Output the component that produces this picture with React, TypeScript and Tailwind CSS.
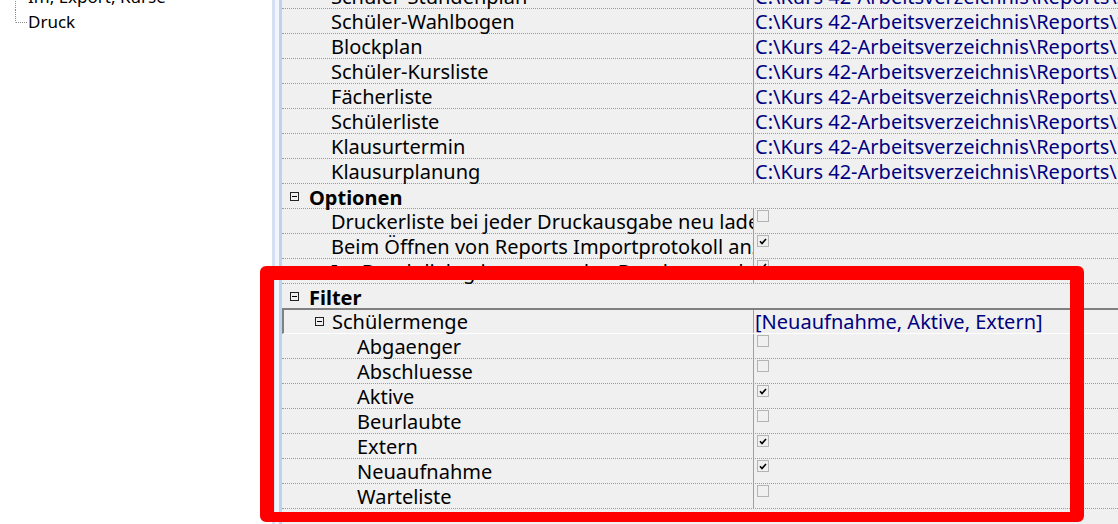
import React from 'react';

const PATH = 'C:\\Kurs 42-Arbeitsverzeichnis\\Reports\\';

type Prop = { label: string; value?: string; check?: boolean };

const reports: Prop[] = [
  { label: 'Schüler-Stundenplan', value: PATH + 'Schuelerstundenplan.rpt' },
  { label: 'Schüler-Wahlbogen', value: PATH + 'Schuelerwahlbogen.rpt' },
  { label: 'Blockplan', value: PATH + 'Blockplan.rpt' },
  { label: 'Schüler-Kursliste', value: PATH + 'Schuelerkursliste.rpt' },
  { label: 'Fächerliste', value: PATH + 'Faecherliste.rpt' },
  { label: 'Schülerliste', value: PATH + 'Schuelerliste.rpt' },
  { label: 'Klausurtermin', value: PATH + 'Klausurtermin.rpt' },
  { label: 'Klausurplanung', value: PATH + 'Klausurplanung.rpt' },
];

const options: Prop[] = [
  { label: 'Druckerliste bei jeder Druckausgabe neu laden', check: false },
  { label: 'Beim Öffnen von Reports Importprotokoll anzeigen', check: true },
  { label: 'Im Druckdialog immer an den Drucker senden', check: true },
];

const mengen: Prop[] = [
  { label: 'Abgaenger', check: false },
  { label: 'Abschluesse', check: false },
  { label: 'Aktive', check: true },
  { label: 'Beurlaubte', check: false },
  { label: 'Extern', check: true },
  { label: 'Neuaufnahme', check: true },
  { label: 'Warteliste', check: false },
];

function Expander() {
  return (
    <span className="flex h-[9px] w-[9px] shrink-0 items-center justify-center border border-[#222]">
      <span className="h-px w-[5px] bg-black" />
    </span>
  );
}

function CheckBox({ checked }: { checked?: boolean }) {
  return (
    <span className="ml-[3px] mt-[1px] flex h-[12px] w-[12px] items-center justify-center border border-[#b4b4b4]">
      {checked && (
        <svg width="8" height="7" viewBox="0 0 8 7" className="block">
          <path d="M1 3.3 L3 5.5 L7 1" fill="none" stroke="#000" strokeWidth="1.6" />
        </svg>
      )}
    </span>
  );
}

function PropRow({ prop, sub }: { prop: Prop; sub?: boolean }) {
  return (
    <div className="flex h-[25px] border-b border-dotted border-[#9a9a9a]">
      <div
        className={
          'w-[472px] shrink-0 overflow-x-clip whitespace-nowrap border-r border-[#a0a0a0] pt-[2px] leading-[21px] ' +
          (sub ? 'pl-[75px]' : 'pl-[49px]')
        }
      >
        {prop.label}
      </div>
      <div className="flex min-w-0 flex-1 overflow-x-clip whitespace-nowrap text-[#000080]">
        {prop.value !== undefined ? (
          <span className="pl-[1px] pt-[2px] leading-[21px]">{prop.value}</span>
        ) : (
          <CheckBox checked={prop.check} />
        )}
      </div>
    </div>
  );
}

function CategoryRow({ label, last }: { label: string; last?: boolean }) {
  return (
    <div
      className={
        'flex items-center gap-[10px] pl-[8px] font-bold ' +
        (last ? 'h-[24px]' : 'h-[25px] border-b border-dotted border-[#9a9a9a]')
      }
    >
      <Expander />
      <span className="pt-[2px] leading-[21px]">{label}</span>
    </div>
  );
}

function TreeRow({ label, last }: { label: string; last?: boolean }) {
  return (
    <div className="flex h-[25px] items-start">
      <svg width="28" height="25" className="block shrink-0">
        <line x1="15.5" y1="0" x2="15.5" y2={last ? 12.5 : 25} stroke="#8a8a8a" strokeDasharray="1 1" />
        <line x1="16" y1="12.5" x2="27" y2="12.5" stroke="#8a8a8a" strokeDasharray="1 1" />
      </svg>
      <span className="pt-[2px] leading-[20px]">{label}</span>
    </div>
  );
}

export default function App() {
  return (
    <div className="relative flex h-[524px] w-[1118px] overflow-hidden bg-white font-['Noto_Sans',sans-serif] text-black">
      <aside className="w-[272px] shrink-0 overflow-hidden bg-white text-[17px]">
        <div className="-mt-[15px]">
          <TreeRow label="Im, Export, Kurse" />
          <TreeRow label="Druck" last />
        </div>
      </aside>

      <div className="w-[10px] shrink-0 border-l-[3px] border-r-[3px] border-l-[#d3e0f3] border-r-[#bfd3ee] bg-[#f2f6fc]" />

      <main className="min-w-0 flex-1 overflow-hidden bg-[#f0f0f0] text-[20px]">
        <div className="-mt-[16px]">
          {reports.map((p) => (
            <PropRow key={p.label} prop={p} />
          ))}
          <CategoryRow label="Optionen" />
          {options.map((p) => (
            <PropRow key={p.label} prop={p} />
          ))}
          <CategoryRow label="Filter" last />

          <div className="flex h-[26px] border-b border-l-2 border-t-2 border-b-white border-l-[#808080] border-t-[#808080]">
            <div className="flex w-[470px] shrink-0 items-start gap-[8px] overflow-x-clip whitespace-nowrap border-r border-[#a0a0a0] pl-[31px]">
              <span className="mt-[7px]">
                <Expander />
              </span>
              <span className="pt-[1px] leading-[21px]">Schülermenge</span>
            </div>
            <div className="min-w-0 flex-1 overflow-x-clip whitespace-nowrap pl-[1px] pt-[1px] leading-[21px] text-[#000080]">
              [Neuaufnahme, Aktive, Extern]
            </div>
          </div>

          {mengen.map((p) => (
            <PropRow key={p.label} prop={p} sub />
          ))}
        </div>
      </main>

      <div className="pointer-events-none absolute left-[260px] top-[266px] h-[256px] w-[824px] rounded-[6px] border-[14px] border-b-[10px] border-[#ff0000]" />
    </div>
  );
}
